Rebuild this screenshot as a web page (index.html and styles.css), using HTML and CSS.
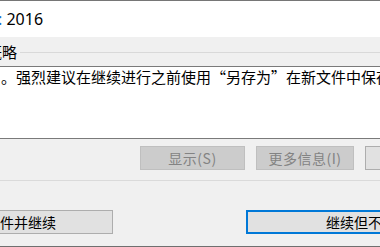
FILE: index.html
```html
<!DOCTYPE html>
<html lang="zh-CN">
<head>
<meta charset="utf-8">
<link rel="stylesheet" href="styles.css">
</head>
<body>
<div class="window">
  <div class="topline"></div>
  <div class="header"><span class="title"><span class="colon">:</span> 2016</span></div>
  <div class="group">
    <div class="legend"><span class="legend-text">概略</span><span class="rule"></span></div>
    <div class="textbox"><p class="msg">。强烈建议在继续进行之前使用“另存为”在新文件中保存副本。</p></div>
  </div>
  <div class="actions">
    <button class="btn btn-disabled btn-show" disabled>显示(S)</button>
    <button class="btn btn-disabled btn-more" disabled>更多信息(I)</button>
    <button class="btn btn-help">帮助(H)</button>
  </div>
  <div class="sep"></div>
  <div class="footer">
    <button class="btn btn-left">另存为新文件并继续</button>
    <button class="btn btn-default">继续但不保存</button>
  </div>
  <div class="bottomline"></div>
</div>
</body>
</html>
```

FILE: styles.css
```css
html, body {
  margin: 0;
  padding: 0;
}
body {
  width: 380px;
  height: 247px;
  overflow: hidden;
  background: #f0f0f0;
  font-family: "Noto Sans CJK SC", "Noto Sans", sans-serif;
}
.window {
  width: 380px;
  height: 247px;
  overflow: hidden;
  display: flex;
  flex-direction: column;
  background: #f0f0f0;
}
.topline {
  height: 1px;
  flex: none;
  background: #767676;
}
.header {
  height: 36px;
  flex: none;
  background: #ffffff;
  display: flex;
  align-items: flex-start;
}
.title {
  font-family: "Noto Sans", sans-serif;
  font-size: 16px;
  line-height: 20px;
  margin-top: 8px;
  color: #000000;
  white-space: nowrap;
}
.colon {
  color: #1a6fd1;
  margin-left: -2px;
}
.group {
  flex: none;
  padding-top: 7px;
}
.legend {
  height: 16px;
  display: flex;
  align-items: center;
  margin-bottom: 6px;
}
.legend-text {
  font-size: 15px;
  line-height: 16px;
  margin-left: -13px;
  white-space: nowrap;
  color: #000;
}
.rule {
  flex: 1;
  height: 1px;
  background: #d9d9d9;
  margin-left: 3px;
}
.textbox {
  height: 71px;
  background: #ffffff;
  border-top: 1px solid #7a7a7a;
  border-bottom: 1px solid #7a7a7a;
  overflow: hidden;
}
.msg {
  margin: 1px 0 0 1px;
  font-size: 15px;
  line-height: 17px;
  white-space: nowrap;
  color: #000;
}
.actions {
  flex: none;
  display: flex;
  gap: 11px;
  margin-top: 7px;
  padding-left: 140px;
}
.btn {
  flex: none;
  box-sizing: border-box;
  height: 24px;
  margin: 0;
  padding: 0;
  font-family: "Noto Sans CJK SC", "Noto Sans", sans-serif;
  font-size: 14px;
  line-height: 20px;
  background: #e1e1e1;
  border: 1px solid #adadad;
  color: #000;
  white-space: nowrap;
  text-align: center;
}
.btn-disabled {
  background: #cccccc;
  border-color: #bfbfbf;
  color: #838383;
  letter-spacing: 0.5px;
}
.btn-show {
  width: 105px;
}
.btn-more {
  width: 98px;
}
.btn-help {
  width: 100px;
}
.sep {
  flex: none;
  height: 1px;
  margin-top: 10px;
  background: #dadada;
}
.footer {
  flex: none;
  display: flex;
  margin-top: 29px;
}
.btn-left {
  width: 240px;
  margin-left: -127px;
}
.btn-default {
  width: 244px;
  margin-left: 133px;
  border: 2px solid #0078d7;
}
.bottomline {
  flex: none;
  height: 1px;
  margin-top: 12px;
  background: #6f6f6f;
}
```
